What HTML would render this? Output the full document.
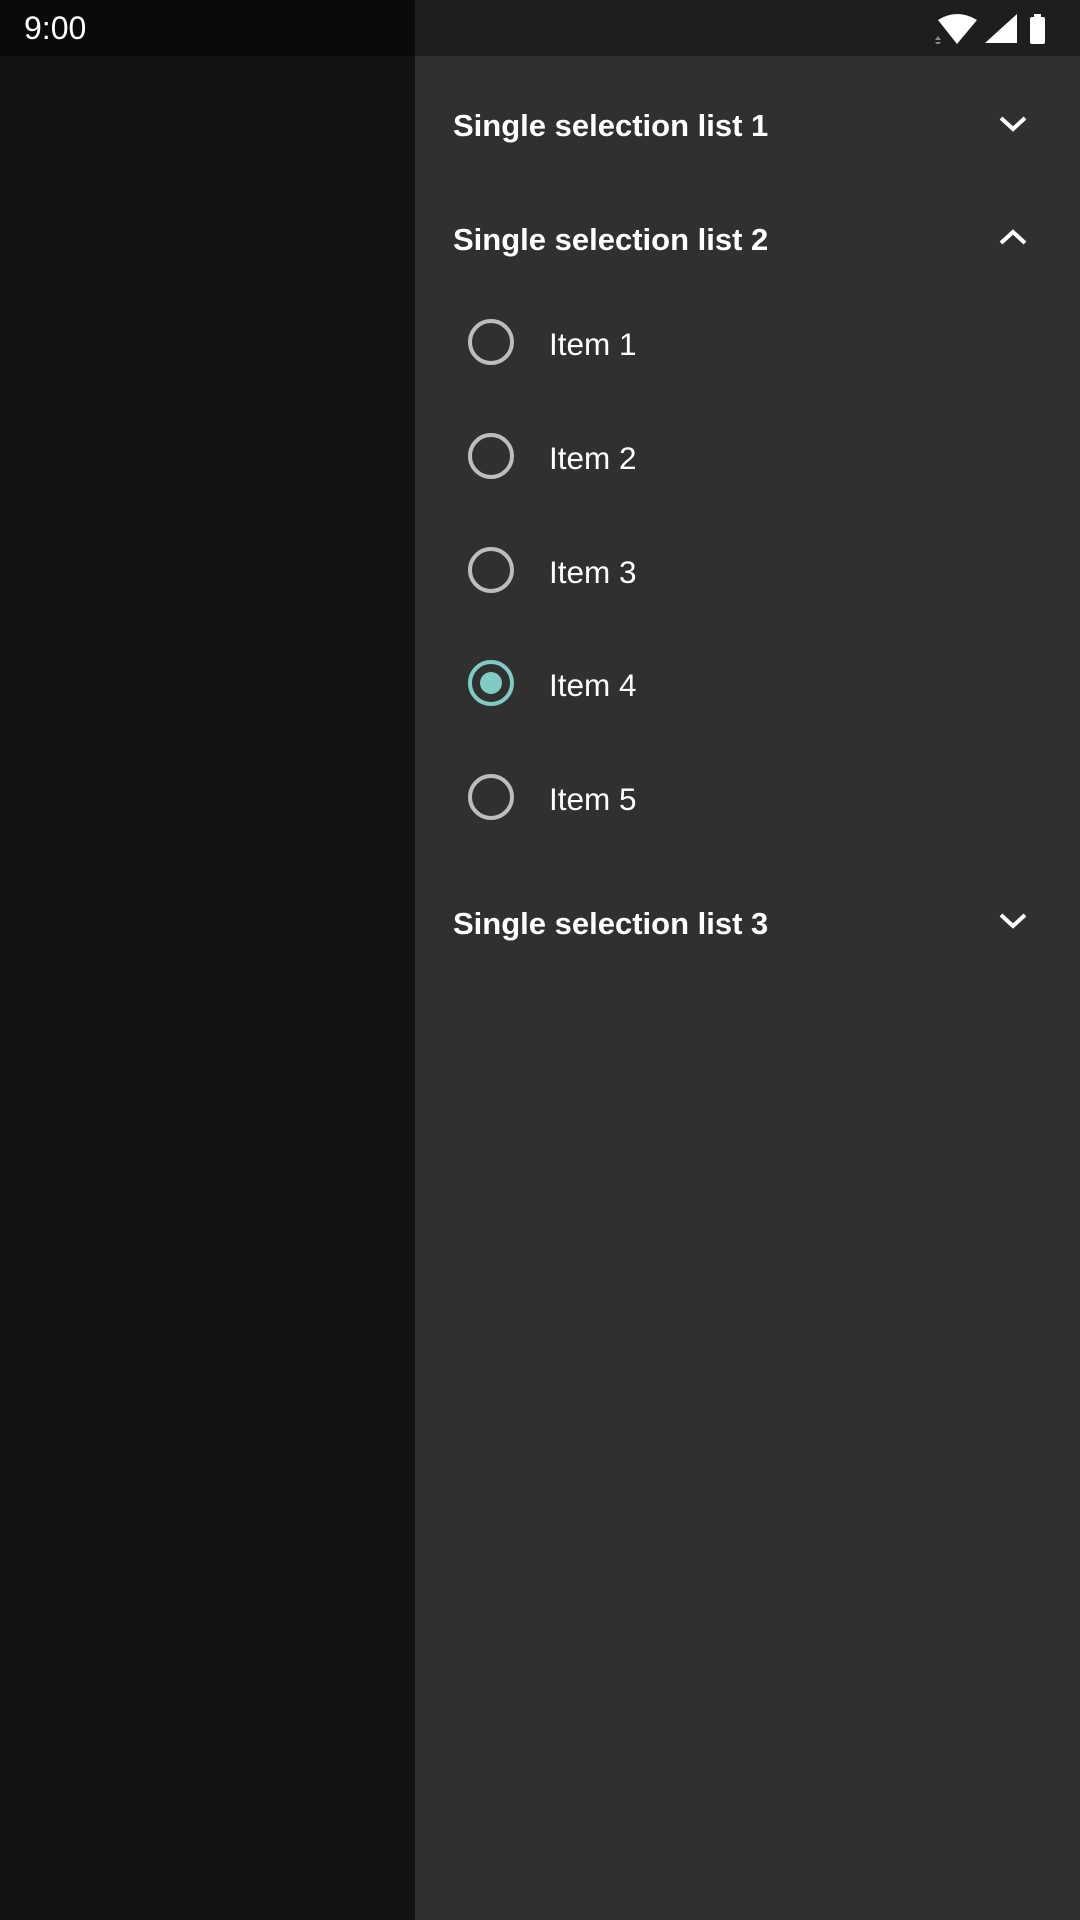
<!DOCTYPE html>
<html><head><meta charset="utf-8"><style>
*{margin:0;padding:0;box-sizing:border-box}
body{width:1080px;height:1920px;background:#121212;position:relative;overflow:hidden;font-family:"Liberation Sans",sans-serif;color:#fff}
.sbl{position:absolute;left:0;top:0;width:415px;height:56px;background:#0a0a0a}
.sbr{position:absolute;left:415px;top:0;width:665px;height:56px;background:#1e1e1e}
.panel{position:absolute;left:415px;top:56px;width:665px;height:1864px;background:#303030}
.time{position:absolute;left:24px;top:10px;font-size:32px}
.h{position:absolute;left:453px;font-size:31px;font-weight:bold;line-height:40px}
.chev{position:absolute;left:997px;width:32px;height:22px}
.it{position:absolute;left:549px;font-size:31.5px;line-height:40px}
.r{position:absolute;left:468px;width:46px;height:46px;border:4px solid #bdbdbd;border-radius:50%}
.r.on{border-color:#80cbc4}
.r.on::after{content:"";position:absolute;left:8px;top:8px;width:22px;height:22px;border-radius:50%;background:#80cbc4}
</style></head><body>
<div class="sbl"></div><div class="sbr"></div>
<div class="time">9:00</div>
<svg style="position:absolute;left:935px;top:14px" width="115" height="30" viewBox="0 0 115 30">
<path d="M3 6 Q22 -6 42 6 L22 30 Z" fill="#fff"/>
<path d="M0 26 L3 22 L6 26Z M0 28 L6 28 L3 32Z" fill="#888"/>
<path d="M50 29 L82 29 L82 0 Z" fill="#fff"/>
<rect x="95" y="3" width="15" height="27" rx="2" fill="#fff"/><rect x="99" y="0" width="7" height="4" fill="#fff"/>
</svg>
<div class="panel"></div>
<div class="h" style="top:106px">Single selection list 1</div>
<svg class="chev" style="top:113px" viewBox="0 0 32 22"><path d="M4 5 L16 16 L28 5" stroke="#fff" stroke-width="4" fill="none"/></svg>
<div class="h" style="top:220px">Single selection list 2</div>
<svg class="chev" style="top:226px" viewBox="0 0 32 22"><path d="M4 17 L16 6 L28 17" stroke="#fff" stroke-width="4" fill="none"/></svg>
<div class="r" style="top:319px"></div><div class="it" style="top:324px">Item 1</div>
<div class="r" style="top:433px"></div><div class="it" style="top:438px">Item 2</div>
<div class="r" style="top:547px"></div><div class="it" style="top:552px">Item 3</div>
<div class="r on" style="top:660px"></div><div class="it" style="top:665px">Item 4</div>
<div class="r" style="top:774px"></div><div class="it" style="top:779px">Item 5</div>
<div class="h" style="top:904px">Single selection list 3</div>
<svg class="chev" style="top:910px" viewBox="0 0 32 22"><path d="M4 5 L16 16 L28 5" stroke="#fff" stroke-width="4" fill="none"/></svg>
</body></html>
